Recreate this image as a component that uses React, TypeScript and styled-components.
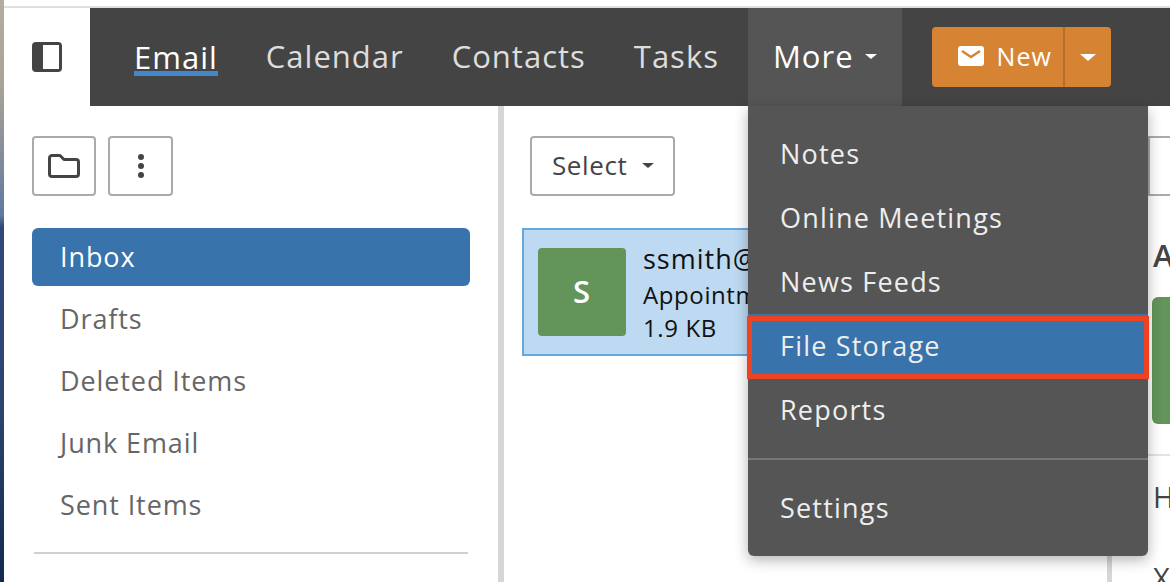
import styled, { createGlobalStyle } from 'styled-components';

const GlobalStyle = createGlobalStyle`
  html, body {
    margin: 0;
    height: 100%;
    background: #fff;
    overflow: hidden;
  }
  #root {
    height: 100%;
  }
  * {
    box-sizing: border-box;
  }
`;

const Screen = styled.div`
  display: flex;
  width: 1170px;
  height: 582px;
  overflow: hidden;
  font-family: 'Open Sans', 'Liberation Sans', sans-serif;
  letter-spacing: 1px;
`;

const Wallpaper = styled.div`
  flex: 0 0 4px;
  background: linear-gradient(
    #b5ac9c 0%,
    #a8a396 15%,
    #8a8f9c 25%,
    #5f7a9e 37%,
    #2f4a7a 39%,
    #2c4470 70%,
    #14294f 100%
  );
`;

const Window = styled.div`
  position: relative;
  flex: 1;
  min-width: 0;
  display: flex;
  flex-direction: column;
  padding-top: 6px;
`;

const Header = styled.header`
  flex: 0 0 100px;
  display: flex;
  border-top: 2px solid #dedede;
`;

const ToggleCell = styled.div`
  flex: 0 0 86px;
  display: flex;
  align-items: center;
  justify-content: center;
`;

const Nav = styled.nav`
  flex: 1;
  display: flex;
  padding-left: 20px;
  background: #444;
`;

const NavItem = styled.div<{ $open?: boolean }>`
  display: flex;
  align-items: center;
  gap: 11px;
  margin-left: ${({ $open }) => ($open ? '5px' : '0')};
  padding: 0 ${({ $open }) => ($open ? '25px' : '24px')} 2px;
  font-size: 31px;
  color: ${({ $open }) => ($open ? '#fff' : '#ddd')};
  background: ${({ $open }) => ($open ? '#555' : 'transparent')};
`;

const ActiveLabel = styled.span`
  color: #fff;
  line-height: 28px;
  border-bottom: 5px solid #4488cc;
  margin-top: 7px;
  height: 33px;
`;

const Caret = styled.span<{ $color?: string; $size?: number }>`
  display: inline-block;
  border-left: ${({ $size = 6 }) => $size}px solid transparent;
  border-right: ${({ $size = 6 }) => $size}px solid transparent;
  border-top: ${({ $size = 6 }) => $size - 1}px solid ${({ $color = '#fff' }) => $color};
`;

const NewButton = styled.div`
  align-self: center;
  display: flex;
  height: 60px;
  width: 179px;
  margin-left: 30px;
  border-radius: 4px;
  background: #d68434;
  color: #fff;
  font-size: 25px;
`;

const NewMain = styled.div`
  flex: 1;
  display: flex;
  align-items: center;
  gap: 13px;
  padding: 0 0 2px 26px;
  border-right: 2px solid #b56f2a;
`;

const NewCaret = styled.div`
  flex: 0 0 46px;
  display: flex;
  align-items: center;
  justify-content: center;
`;

const Panes = styled.div`
  flex: 1;
  min-height: 0;
  display: flex;
`;

const Sidebar = styled.aside`
  flex: 0 0 494px;
  padding: 30px 28px 0;
  border-right: 6px solid #d6d6d6;
`;

const Toolbar = styled.div`
  display: flex;
  gap: 12px;
  height: 60px;
  margin-bottom: 32px;
`;

const IconButton = styled.div<{ $width: number }>`
  display: flex;
  align-items: center;
  justify-content: center;
  width: ${({ $width }) => $width}px;
  border: 2px solid #aaa;
  border-radius: 4px;
`;

const Folders = styled.ul`
  margin: 0;
  padding: 0 0 14px;
  width: 438px;
  list-style: none;
`;

const Folder = styled.li<{ $active?: boolean }>`
  height: 58px;
  margin-bottom: 4px;
  padding-left: 28px;
  line-height: 58px;
  font-size: 27px;
  letter-spacing: 0.9px;
  border-radius: 6px;
  color: ${({ $active }) => ($active ? '#fff' : '#666')};
  background: ${({ $active }) => ($active ? '#3873ab' : 'transparent')};
`;

const SidebarRule = styled.div`
  width: 434px;
  height: 2px;
  margin-left: 2px;
  background: #d0d0d0;
`;

const ListPane = styled.section`
  flex: 0 0 608px;
  padding: 30px 18px 0;
  border-right: 5px solid #d6d6d6;
`;

const SelectButton = styled.div`
  display: flex;
  align-items: center;
  gap: 15px;
  width: 145px;
  height: 60px;
  margin: 0 0 32px 8px;
  padding: 0 0 2px 20px;
  border: 2px solid #aaa;
  border-radius: 4px;
  font-size: 26px;
  letter-spacing: 0.6px;
  color: #444;
`;

const MessageCard = styled.div`
  display: flex;
  gap: 17px;
  height: 128px;
  padding: 18px 14px;
  border: 2px solid #66a8d9;
  background: #bddaf2;
  color: #111;
`;

const Avatar = styled.div`
  flex: 0 0 88px;
  height: 88px;
  display: flex;
  align-items: center;
  justify-content: center;
  padding-bottom: 2px;
  border-radius: 4px;
  background: #63945a;
  color: #fff;
  font-size: 31px;
  font-weight: 600;
`;

const MessageText = styled.div`
  font-size: 24px;
  line-height: 33px;
  letter-spacing: 0.6px;
`;

const Sender = styled.div`
  font-size: 27px;
  line-height: 24px;
  margin: -1px 0 7px;
  letter-spacing: 1px;
`;

const ReadingPane = styled.section`
  flex: 1;
  min-width: 0;
  padding: 30px 0 0 36px;
  color: #444;
  white-space: nowrap;
`;

const ReadingBar = styled.div`
  height: 60px;
  margin-bottom: 42px;
  border: 2px solid #aaa;
  border-right: 0;
`;

const Subject = styled.div`
  height: 59px;
  font-size: 31px;
  font-weight: 600;
  line-height: 34px;
  padding-left: 5px;
`;

const SenderPhoto = styled.div`
  height: 127px;
  margin-left: 4px;
  border-radius: 6px 0 0 6px;
  background: #63945a;
`;

const BodyRule = styled.div`
  height: 2px;
  margin-top: 30px;
  background: #e3e3e3;
`;

const BodyLine = styled.div<{ $gap: number }>`
  margin-top: ${({ $gap }) => $gap}px;
  padding-left: 5px;
  font-size: 29px;
  line-height: 30px;
`;

const Menu = styled.div`
  position: absolute;
  top: 106px;
  left: 744px;
  width: 400px;
  height: 450px;
  padding: 16px 0;
  border-radius: 0 0 6px 6px;
  background: #555;
  box-shadow: 0 4px 14px rgba(0, 0, 0, 0.3);
`;

const MenuItem = styled.div<{ $active?: boolean; $flagged?: boolean }>`
  position: relative;
  height: 64px;
  padding-left: 32px;
  line-height: 64px;
  font-size: 27px;
  letter-spacing: 1.2px;
  color: #eee;
  background: ${({ $active }) => ($active ? '#3873ab' : 'transparent')};

  ${({ $flagged }) =>
    $flagged &&
    `
    &::after {
      content: '';
      position: absolute;
      top: 2px;
      left: -1px;
      right: -1px;
      bottom: -1px;
      border: 5px solid #ee4323;
    }
  `}
`;

const MenuRule = styled.div`
  height: 2px;
  margin: 16px 0;
  background: #777;
`;

const PanelIcon = () => (
  <svg width="30" height="30" viewBox="0 0 30 30">
    <rect x="0" y="0" width="30" height="30" rx="4" fill="#444" />
    <rect x="11" y="3" width="16" height="24" fill="#fff" />
  </svg>
);

const FolderIcon = () => (
  <svg width="32" height="24" viewBox="0 0 32 24" fill="none" stroke="#444" strokeWidth="3" strokeLinejoin="round">
    <path d="M1.5 4a2.5 2.5 0 0 1 2.5-2.5h8l4 4h12a2.5 2.5 0 0 1 2.5 2.5v12a2.5 2.5 0 0 1-2.5 2.5H4A2.5 2.5 0 0 1 1.5 20z" />
  </svg>
);

const KebabIcon = () => (
  <svg width="6" height="24" viewBox="0 0 6 24" fill="#444">
    <circle cx="3" cy="3" r="3" />
    <circle cx="3" cy="12" r="3" />
    <circle cx="3" cy="21" r="3" />
  </svg>
);

const MailIcon = () => (
  <svg width="26" height="20" viewBox="0 0 26 20">
    <rect width="26" height="20" rx="3" fill="#fff" />
    <path d="M4 5l9 6 9-6" fill="none" stroke="#d68434" strokeWidth="2.5" />
  </svg>
);

const folders = ['Inbox', 'Drafts', 'Deleted Items', 'Junk Email', 'Sent Items'];
const navItems = ['Calendar', 'Contacts', 'Tasks'];

export default function App() {
  return (
    <>
      <GlobalStyle />
      <Screen>
        <Wallpaper />
        <Window>
          <Header>
            <ToggleCell>
              <PanelIcon />
            </ToggleCell>
            <Nav>
              <NavItem>
                <ActiveLabel>Email</ActiveLabel>
              </NavItem>
              {navItems.map((item) => (
                <NavItem key={item}>{item}</NavItem>
              ))}
              <NavItem $open>
                More
                <Caret />
              </NavItem>
              <NewButton>
                <NewMain>
                  <MailIcon />
                  New
                </NewMain>
                <NewCaret>
                  <Caret $size={8} />
                </NewCaret>
              </NewButton>
            </Nav>
          </Header>
          <Panes>
            <Sidebar>
              <Toolbar>
                <IconButton $width={64}>
                  <FolderIcon />
                </IconButton>
                <IconButton $width={65}>
                  <KebabIcon />
                </IconButton>
              </Toolbar>
              <Folders>
                {folders.map((name, index) => (
                  <Folder key={name} $active={index === 0}>
                    {name}
                  </Folder>
                ))}
              </Folders>
              <SidebarRule />
            </Sidebar>
            <ListPane>
              <SelectButton>
                Select
                <Caret $color="#444" />
              </SelectButton>
              <MessageCard>
                <Avatar>S</Avatar>
                <MessageText>
                  <Sender>ssmith@example.com</Sender>
                  <div>Appointment</div>
                  <div>1.9 KB</div>
                </MessageText>
              </MessageCard>
            </ListPane>
            <ReadingPane>
              <ReadingBar />
              <Subject>Appointment</Subject>
              <SenderPhoto />
              <BodyRule />
              <BodyLine $gap={26}>Hi</BodyLine>
              <BodyLine $gap={51}>X</BodyLine>
            </ReadingPane>
          </Panes>
          <Menu>
            <MenuItem>Notes</MenuItem>
            <MenuItem>Online Meetings</MenuItem>
            <MenuItem>News Feeds</MenuItem>
            <MenuItem $active $flagged>
              File Storage
            </MenuItem>
            <MenuItem>Reports</MenuItem>
            <MenuRule />
            <MenuItem>Settings</MenuItem>
          </Menu>
        </Window>
      </Screen>
    </>
  );
}
